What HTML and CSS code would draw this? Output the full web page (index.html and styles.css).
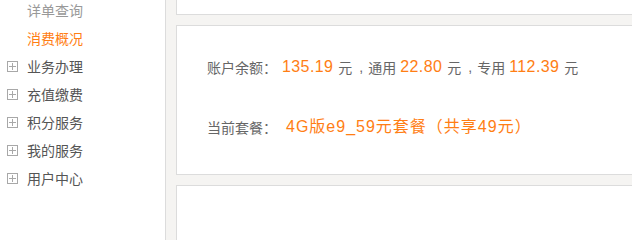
FILE: index.html
```html
<!DOCTYPE html>
<html lang="zh-CN">
<head>
<meta charset="utf-8">
<title>消费概况</title>
<link rel="stylesheet" href="styles.css">
</head>
<body>
<div class="page">
  <aside class="sidebar">
    <ul class="menu">
      <li class="sub">详单查询</li>
      <li class="sub active">消费概况</li>
      <li class="top"><span class="plus"></span>业务办理</li>
      <li class="top"><span class="plus"></span>充值缴费</li>
      <li class="top"><span class="plus"></span>积分服务</li>
      <li class="top"><span class="plus"></span>我的服务</li>
      <li class="top"><span class="plus"></span>用户中心</li>
    </ul>
  </aside>
  <main class="main">
    <section class="card card-prev"></section>
    <section class="card card-summary">
      <div class="row">
        <span class="label">账户余额：</span><span class="num first">135.19</span><span class="unit">元</span><span class="sep">,</span><span class="unit">通用</span><span class="num">22.80</span><span class="unit">元</span><span class="sep">,</span><span class="unit">专用</span><span class="num">112.39</span><span class="unit">元</span>
      </div>
      <div class="row">
        <span class="label">当前套餐：</span><span class="plan">4G版e9_59元套餐（共享49元）</span>
      </div>
    </section>
    <section class="card card-next"></section>
  </main>
</div>
</body>
</html>
```

FILE: styles.css
```css
* { box-sizing: border-box; }

html, body {
  margin: 0;
  padding: 0;
  background: #fff;
  overflow: hidden;
  height: 100%;
}

body {
  font-family: "Liberation Sans", "Noto Sans CJK SC", sans-serif;
  color: #666;
}

.page {
  display: flex;
  width: 100%;
  min-height: 100%;
  overflow: hidden;
}

.sidebar {
  width: 166px;
  flex: none;
  border-right: 1px solid #dcdcdc;
  background: #fff;
}

.menu {
  list-style: none;
  margin: -4px 0 0 0;
  padding: 0;
}

.menu li {
  height: 28px;
  line-height: 28px;
  font-size: 14px;
  font-family: "Noto Sans CJK SC", sans-serif;
  display: flex;
  align-items: center;
  white-space: nowrap;
}

.menu .sub {
  padding-left: 27px;
  color: #999;
}

.menu .sub.active {
  color: #ff7e14;
}

.menu .top {
  padding-left: 7px;
  color: #555;
}

.plus {
  width: 11px;
  height: 11px;
  border: 1px solid #a8a8a8;
  margin-right: 9px;
  position: relative;
  flex: none;
}

.plus::before,
.plus::after {
  content: "";
  position: absolute;
  background: #a8a8a8;
}

.plus::before {
  left: 1px;
  right: 1px;
  top: 4px;
  height: 1px;
}

.plus::after {
  top: 1px;
  bottom: 1px;
  left: 4px;
  width: 1px;
}

.main {
  flex: 1;
  background: #f5f4f2;
  padding-left: 10px;
  display: flex;
  flex-direction: column;
  gap: 10px;
  min-width: 0;
}

.card {
  background: #fff;
  border: 1px solid #dcdcdc;
  border-right: none;
  flex: none;
}

.card-prev {
  height: 15px;
  border-top: none;
}

.card-summary {
  height: 150px;
  padding: 26px 0 0 30px;
  display: flex;
  flex-direction: column;
  gap: 30px;
}

.card-next {
  flex: 1;
  min-height: 40px;
  border-bottom: none;
}

.row {
  height: 30px;
  line-height: 30px;
  display: flex;
  align-items: center;
  white-space: nowrap;
  font-size: 14px;
}

.label {
  font-family: "Noto Sans CJK SC", sans-serif;
  color: #666;
}

.num {
  color: #ff7e14;
  font-size: 16px;
  letter-spacing: 0.4px;
  margin-right: 5px;
}

.num.first {
  margin-left: 5px;
}

.unit {
  font-family: "Noto Sans CJK SC", sans-serif;
  color: #666;
  margin-right: 4px;
}

.sep {
  font-size: 14px;
  color: #666;
  margin: 0 5px 0 3px;
}

.plan {
  color: #ff7e14;
  font-size: 16px;
  letter-spacing: 1px;
  margin-left: 9px;
  font-family: "Liberation Sans", "Noto Sans CJK SC", sans-serif;
}
```
